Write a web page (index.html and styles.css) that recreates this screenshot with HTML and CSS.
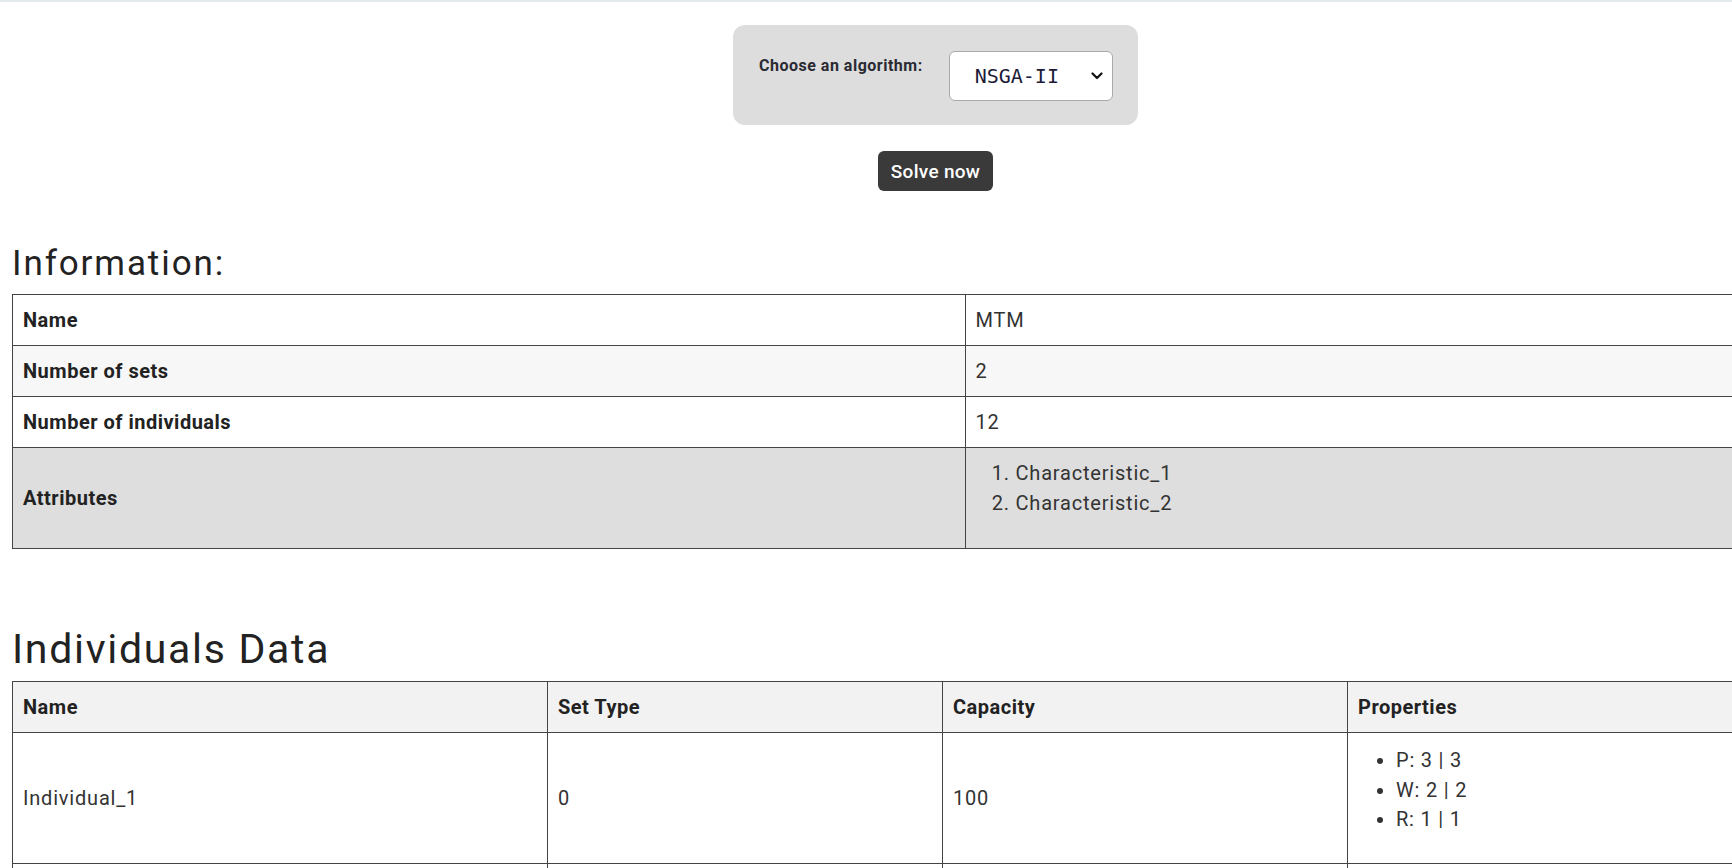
FILE: index.html
```html
<!DOCTYPE html>
<html lang="en">
<head>
<meta charset="utf-8">
<title>Solver</title>
<link rel="stylesheet" href="styles.css">
</head>
<body>
<div class="topline"></div>
<main class="page">
  <section class="controls">
    <div class="algo-box">
      <label class="algo-label" for="algo">Choose an algorithm:</label>
      <div class="select-wrap">
        <select id="algo" class="algo-select">
          <option>NSGA-II</option>
          <option>MOEA/D</option>
          <option>SPEA2</option>
        </select>
        <svg class="chev" width="12" height="8" viewBox="0 0 12 8"><path d="M1.5 1.5 L6 6 L10.5 1.5" fill="none" stroke="#111" stroke-width="2.2" stroke-linecap="round" stroke-linejoin="round"/></svg>
      </div>
    </div>
    <button class="solve-btn" type="button">Solve now</button>
  </section>

  <h2 class="title-info">Information:</h2>
  <table class="info-table">
    <tbody>
      <tr class="row-white"><th>Name</th><td>MTM</td></tr>
      <tr class="row-light"><th>Number of sets</th><td>2</td></tr>
      <tr class="row-white"><th>Number of individuals</th><td>12</td></tr>
      <tr class="row-dark"><th>Attributes</th><td class="list-cell"><ol class="attr-list"><li>Characteristic_1</li><li>Characteristic_2</li></ol></td></tr>
    </tbody>
  </table>

  <h1 class="title-data">Individuals Data</h1>
  <table class="data-table">
    <colgroup><col class="c1"><col class="c2"><col class="c3"><col class="c4"></colgroup>
    <thead>
      <tr><th>Name</th><th>Set Type</th><th>Capacity</th><th>Properties</th></tr>
    </thead>
    <tbody>
      <tr><td>Individual_1</td><td>0</td><td>100</td><td class="prop-cell"><ul class="prop-list"><li>P: 3 | 3</li><li>W: 2 | 2</li><li>R: 1 | 1</li></ul></td></tr>
      <tr><td>Individual_2</td><td>0</td><td>100</td><td class="prop-cell"><ul class="prop-list"><li>P: 2 | 2</li><li>W: 3 | 3</li><li>R: 1 | 1</li></ul></td></tr>
      <tr><td>Individual_3</td><td>1</td><td>100</td><td class="prop-cell"><ul class="prop-list"><li>P: 1 | 1</li><li>W: 2 | 2</li><li>R: 3 | 3</li></ul></td></tr>
    </tbody>
  </table>
</main>
</body>
</html>
```

FILE: styles.css
```css
html, body {
  scrollbar-width: none;
}
::-webkit-scrollbar { display: none; }

body {
  margin: 0;
  background: #ffffff;
  font-family: Roboto, "Liberation Sans", Arial, sans-serif;
  color: #222;
  overflow-x: hidden;
}

.topline {
  height: 2px;
  background: #e4eaec;
}

.page {
  padding: 0 12px;
}

.controls {
  display: flex;
  flex-direction: column;
  align-items: center;
  padding-left: 139px;
  padding-top: 23px;
}

.algo-box {
  display: flex;
  align-items: flex-start;
  gap: 26px;
  background: #dddddd;
  border-radius: 12px;
  padding: 26px 25px 24px 26px;
  width: 405px;
  box-sizing: border-box;
}

.algo-label {
  font-size: 16px;
  font-weight: 700;
  letter-spacing: 0.5px;
  color: #2a2a33;
  line-height: 22px;
  padding-top: 4px;
  white-space: nowrap;
}

.select-wrap {
  position: relative;
}

.algo-select {
  appearance: none;
  -webkit-appearance: none;
  width: 164px;
  height: 50px;
  box-sizing: border-box;
  border: 1px solid #a9a9a9;
  border-radius: 6px;
  background: #fff;
  font-family: "DejaVu Sans Mono", "Liberation Mono", monospace;
  font-size: 20px;
  color: #1c1c3a;
  padding: 0 0 0 25px;
  display: block;
}

.chev {
  position: absolute;
  right: 10px;
  top: 21px;
  pointer-events: none;
}

.solve-btn {
  margin-top: 26px;
  width: 115px;
  height: 40px;
  border: none;
  border-radius: 6px;
  background: #3a3a3a;
  color: #fff;
  font-family: Roboto, "Liberation Sans", Arial, sans-serif;
  font-size: 19px;
  font-weight: 500;
  letter-spacing: 0.3px;
  padding: 0;
}

.title-info {
  margin: 53px 0 10px 0;
  font-size: 35px;
  line-height: 40px;
  font-weight: 400;
  letter-spacing: 1.9px;
  color: #222;
}

.title-data {
  margin: 76px 0 8px 0;
  font-size: 41px;
  line-height: 48px;
  font-weight: 400;
  letter-spacing: 1.7px;
  color: #222;
}

table {
  border-collapse: collapse;
  font-size: 20px;
  table-layout: fixed;
}

th, td {
  border: 1px solid #444;
  padding: 12px 10px;
  line-height: 26px;
  text-align: left;
  vertical-align: middle;
}

th {
  font-weight: 700;
  color: #222;
  letter-spacing: 0.5px;
}

td {
  color: #333;
  letter-spacing: 0.8px;
}

td.list-cell {
  padding-top: 10px;
  padding-bottom: 12px;
}

td.prop-cell {
  padding-top: 13px;
  padding-bottom: 12px;
}

.info-table {
  width: 1906px;
}

.info-table th,
.info-table td {
  width: 50%;
}

.row-white { background: #ffffff; }
.row-light { background: #f7f7f7; }
.row-dark { background: #dedede; }

.attr-list {
  margin: 0 0 18px 0;
  padding-left: 40px;
}

.attr-list li {
  line-height: 30px;
}

.data-table {
  width: 1895px;
}

.data-table .c1 { width: 535px; }
.data-table .c2 { width: 395px; }
.data-table .c3 { width: 405px; }
.data-table .c4 { width: 560px; }

.data-table thead tr {
  background: #f2f2f2;
}

.prop-list {
  margin: 0 0 16.5px 0;
  padding-left: 38px;
}

.prop-list li {
  line-height: 29.5px;
}
```
